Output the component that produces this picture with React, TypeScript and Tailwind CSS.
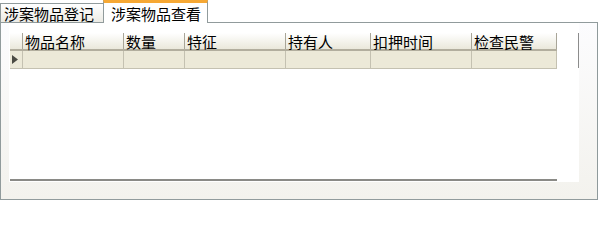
const COLUMNS = [
  { name: '物品名称', w: 'w-[101px]' },
  { name: '数量', w: 'w-[61px]' },
  { name: '特征', w: 'w-[101px]' },
  { name: '持有人', w: 'w-[85px]' },
  { name: '扣押时间', w: 'w-[101px]' },
  { name: '检查民警', w: 'w-[85px]' },
]

export default function App() {
  return (
    <div
      className="w-[600px] h-[200px] bg-white text-black text-[15px] leading-none"
      style={{ fontFamily: '"Noto Sans CJK SC", "Noto Sans", sans-serif' }}
    >
      {/* ━━━ Tabs ━━━ */}
      <div className="flex items-end h-[22px]">
        <div className="h-[19px] w-[103px] pl-[3px] flex items-center border-t border-l border-[#919b9c] bg-gradient-to-b from-white to-[#ecebe5]">
          涉案物品登记
        </div>
        <div className="relative z-10 h-[23px] w-[105px] -mb-px pl-[7px] flex items-center bg-white border-x border-[#919b9c] border-t-[3px] border-t-[#f6a834]">
          涉案物品查看
        </div>
      </div>

      {/* ━━━ Panel ━━━ */}
      <div className="w-[598px] h-[178px] border border-[#919b9c] border-r-[#8f9a9b] bg-gradient-to-b from-[#fcfcfe] to-[#f3f2ed] pl-[8px]">
        <div className="w-[570px] h-[159px] bg-white flex flex-col pt-[10px] pl-px">
          <div className="flex">
            {/* grid */}
            <div className="flex flex-col">
              <div className="flex h-[18px] bg-gradient-to-b from-white to-[#eae8db] border-b-2 border-[#b2ae9e]">
                <div className="w-[13px] border-r border-[#a8a598]" />
                {COLUMNS.map((col) => (
                  <div
                    key={col.name}
                    className={`${col.w} border-r border-[#a8a598] pl-[2px] pt-[1px] flex items-center`}
                  >
                    {col.name}
                  </div>
                ))}
              </div>
              <div className="flex h-[18px] bg-[#ece9d8] border-b border-[#c4c1b1]">
                <div className="w-[13px] border-r border-[#c4c1b1] flex items-center pl-[2px]">
                  <svg width="6" height="9" viewBox="0 0 6 9">
                    <polygon points="0,0 6,4.5 0,9" fill="#4b4b43" />
                  </svg>
                </div>
                {COLUMNS.map((col) => (
                  <div key={col.name} className={`${col.w} border-r border-[#c4c1b1]`} />
                ))}
              </div>
            </div>
            <div className="ml-[21px] w-px h-[35px] bg-[#8c8c8c]" />
          </div>
          <div className="mt-auto mb-px w-[547px] h-[2px] bg-[#8a8a86]" />
        </div>
      </div>
    </div>
  )
}
